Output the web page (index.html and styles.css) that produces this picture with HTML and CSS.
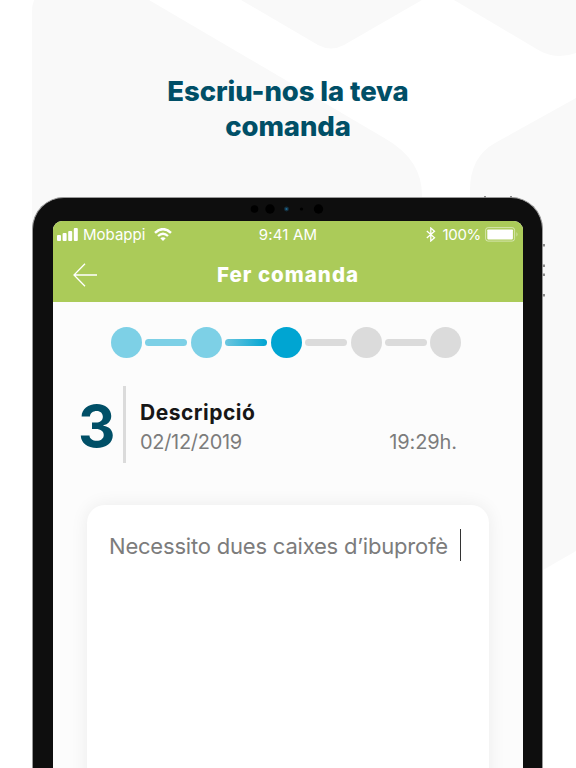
FILE: index.html
```html
<!DOCTYPE html>
<html lang="ca">
<head>
  <meta charset="UTF-8">
  <title>Fer comanda</title>
  <link rel="stylesheet" href="styles.css">
</head>
<body>
  <svg class="backdrop" viewBox="0 0 576 768" fill="#f9f9f9">
    <path d="M34 0H149L386 139Q422 160 422 195V300H32V12Q32 5 34 0Z"/>
    <path d="M241 0H422L344 45Q331 52 318 45Z"/>
    <path d="M454 0H576V53Q557 60 540 51Z"/>
    <path d="M576 98L495 143Q470 157 470 190V612L576 551Z"/>
  </svg>

  <h1 class="headline">Escriu-nos la teva<br>comanda</h1>

  <main class="tablet">
    <!-- side buttons -->
    <svg class="buttons" viewBox="0 0 70 110" fill="#8b8b8b">
      <path d="M9 0h2v2h-2zM35 0h2v2h-2zM67.5 48h2.5v2.5h-2.5zM67.5 68.5h2.5v2.5h-2.5zM67.5 77.5h2.5v2.5h-2.5zM67.5 98h2.5v2.5h-2.5z"/>
    </svg>
    <svg class="sensors" viewBox="0 0 80 12">
      <circle cx="6.5" cy="6" r="3.8"/>
      <circle cx="22" cy="6" r="4.7"/>
      <circle cx="38.5" cy="6" r="2.4" fill="#15303f"/>
      <circle cx="38.5" cy="6" r="1.1" fill="#1c6a96"/>
      <circle cx="53.5" cy="6" r="1.6"/>
      <circle cx="70.5" cy="6" r="4.7"/>
    </svg>

    <div class="screen">
      <header>
        <div class="status">
          <div class="status-left">
            <svg width="21" height="13" viewBox="0 0 21 13" fill="#fff">
              <rect x="0" y="7" width="4" height="6" rx="1"/>
              <rect x="5.6" y="5" width="4" height="8" rx="1"/>
              <rect x="11.2" y="3" width="4" height="10" rx="1"/>
              <rect x="16.8" y="0" width="4" height="13" rx="1"/>
            </svg>
            <span class="carrier">Mobappi</span>
            <svg width="18" height="13" viewBox="0 0 18 13" fill="none" stroke="#fff">
              <path d="M1 4.8Q9-2.5 17 4.8" stroke-width="2.5"/>
              <path d="M4 8Q9 3.5 14 8" stroke-width="2.3"/>
              <path d="M6.3 10.3Q9 8 11.7 10.3L9 13Z" fill="#fff" stroke="none"/>
            </svg>
          </div>
          <span class="clock">9:41 AM</span>
          <div class="status-right">
            <svg width="10" height="15" viewBox="0 0 10 15" fill="none" stroke="#fff" stroke-width="1.3">
              <path d="M.8 4L8.5 10.8 4.8 14V1L8.5 4.2.8 11"/>
            </svg>
            <span class="percent">100%</span>
            <svg width="34" height="15" viewBox="0 0 34 15">
              <rect x=".6" y=".6" width="29" height="13.5" rx="2.5" fill="none" stroke="#fff" stroke-opacity=".5"/>
              <rect x="2.3" y="2.4" width="25.6" height="10" rx=".8" fill="#fff"/>
              <path d="M31.5 5Q33.5 7.4 31.5 9.8Z" fill="#fff" fill-opacity=".5"/>
            </svg>
          </div>
        </div>
        <div class="nav">
          <svg class="back" width="24" height="24" viewBox="0 0 24 24" fill="none" stroke="#fff" stroke-width="1.3">
            <path d="M24 12H1M12 .8L1 12 12 23.2"/>
          </svg>
          <h2>Fer comanda</h2>
        </div>
      </header>

      <div class="steps">
        <span class="dot done"></span>
        <span class="line done"></span>
        <span class="dot done"></span>
        <span class="line half"></span>
        <span class="dot active"></span>
        <span class="line"></span>
        <span class="dot"></span>
        <span class="line"></span>
        <span class="dot"></span>
      </div>

      <section class="info">
        <span class="number">3</span>
        <div class="details">
          <h3>Descripció</h3>
          <div class="when">
            <span class="date">02/12/2019</span>
            <span class="time">19:29h.</span>
          </div>
        </div>
      </section>

      <section class="card">
        <span class="message">Necessito dues caixes d’ibuprofè</span>
        <span class="cursor"></span>
      </section>
    </div>
  </main>
</body>
</html>
```

FILE: styles.css
```css
* {
  box-sizing: border-box;
}
body {
  margin: 0;
  width: 576px;
  height: 768px;
  overflow: hidden;
  position: relative;
  background: #fff;
  font-family: Inter, "Liberation Sans", sans-serif;
}
h1, h2, h3 {
  margin: 0;
}
svg {
  display: block;
  flex: none;
}
.backdrop {
  position: absolute;
  top: 0;
  left: 0;
  width: 576px;
  height: 768px;
}
.headline {
  position: relative;
  height: 197px;
  padding-top: 74px;
  text-align: center;
  color: #004f67;
  font-weight: 800;
  font-size: 27.5px;
  line-height: 35px;
  letter-spacing: -0.1px;
}
.tablet {
  position: relative;
  width: 511px;
  height: 571px;
  margin-left: 32px;
  padding: 23px 19px 0 20px;
  background: #0e0e0e;
  border: 1px solid #9a9a9a;
  border-bottom: 0;
  border-radius: 32px 32px 0 0;
}
.buttons {
  position: absolute;
  top: -2px;
  left: 442px;
  width: 70px;
  height: 110px;
}
.sensors {
  position: absolute;
  top: 5px;
  left: 215px;
  width: 80px;
  height: 12px;
}
.screen {
  height: 547px;
  background: #fcfcfc;
  border-radius: 9px 9px 0 0;
  overflow: hidden;
}
header {
  height: 81px;
  background: #abcb59;
  color: #fff;
}
.status {
  display: grid;
  grid-template-columns: 1fr auto 1fr;
  align-items: center;
  height: 27px;
  padding: 0 4px 0 4px;
  font-size: 15px;
}
.status-left, .status-right {
  display: flex;
  align-items: center;
}
.status-right {
  justify-content: flex-end;
}
.carrier {
  margin: 0 9px 0 5px;
}
.clock {
  letter-spacing: 0.2px;
}
.percent {
  margin: 0 4px 0 6px;
  letter-spacing: -0.3px;
}
.nav {
  display: grid;
  grid-template-columns: 44px 1fr 44px;
  align-items: center;
  height: 53px;
}
.back {
  margin-left: 20px;
}
.nav h2 {
  text-align: center;
  font-size: 20.5px;
  font-weight: 800;
  line-height: 26px;
  letter-spacing: 1px;
}
.steps {
  display: flex;
  align-items: center;
  gap: 3.7px;
  height: 31px;
  margin: 25px 0 0 57.6px;
}
.dot {
  width: 31px;
  height: 31px;
  border-radius: 50%;
  background: #dbdbdb;
}
.line {
  width: 41.6px;
  height: 6.5px;
  border-radius: 4px;
  background: #dbdbdb;
}
.done {
  background: #7dd0e6;
}
.half {
  background: linear-gradient(to right, #6cc6df, #00a5d2);
}
.active {
  background: #00a5d2;
}
.info {
  display: flex;
  height: 77px;
  margin: 28px 0 0 25px;
}
.number {
  width: 45px;
  color: #004f67;
  font-size: 58px;
  font-weight: 700;
  line-height: 81px;
}
.details {
  width: 334px;
  padding: 13px 0 0 14px;
  border-left: 3px solid #dbdbdb;
}
.details h3 {
  color: #171717;
  font-size: 21px;
  font-weight: 700;
  line-height: 28px;
  letter-spacing: 0.5px;
}
.when {
  display: flex;
  justify-content: space-between;
  color: #7c7c7c;
  font-size: 20px;
  line-height: 30px;
  letter-spacing: -0.3px;
}
.time {
  letter-spacing: -0.1px;
}
.card {
  display: flex;
  height: 284px;
  margin: 42px 34px 0 34px;
  padding: 24px 22px;
  background: #fff;
  border-radius: 18px 18px 0 0;
  box-shadow: 0 0 18px rgba(0, 0, 0, 0.07);
}
.message {
  color: #7c7c7c;
  font-size: 22px;
  line-height: 34px;
  letter-spacing: -0.2px;
  white-space: nowrap;
}
.cursor {
  flex: none;
  width: 1.5px;
  height: 32px;
  margin-left: 12px;
  background: #333;
}
```
